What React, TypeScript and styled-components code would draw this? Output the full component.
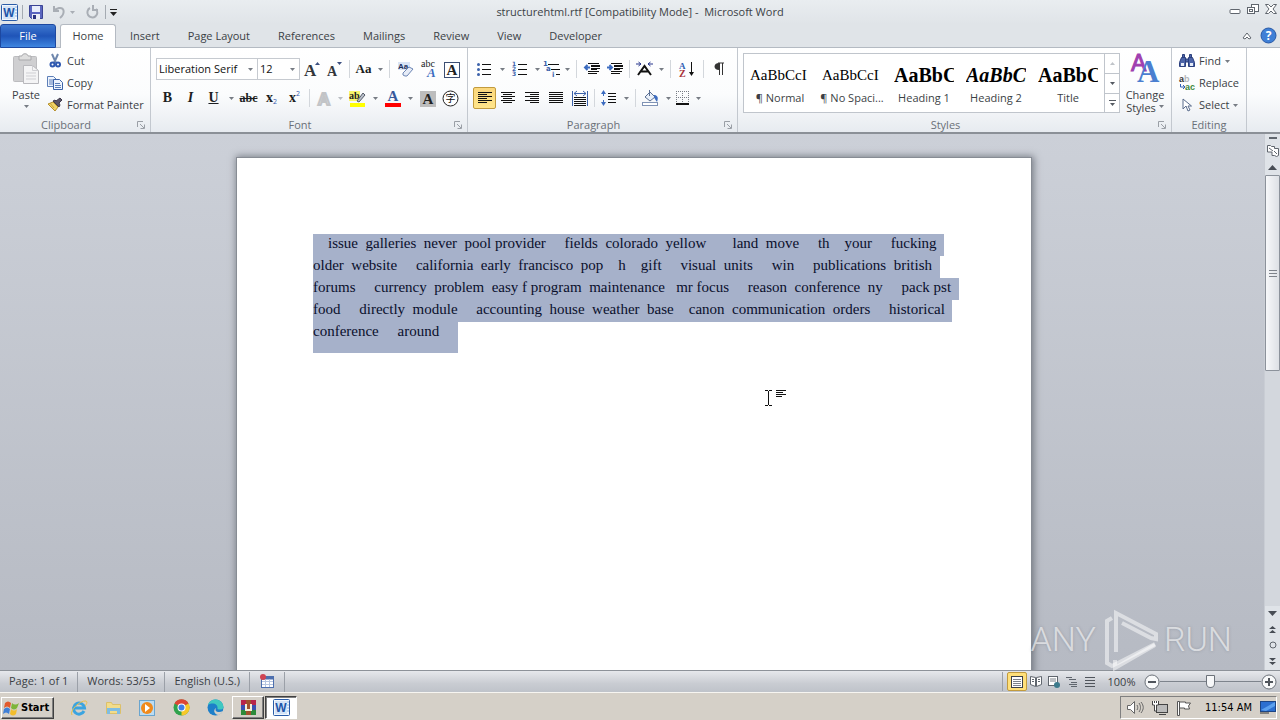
import React from "react";
import styled, { createGlobalStyle, css } from "styled-components";

const Global = createGlobalStyle`
  *, *::before, *::after { box-sizing: border-box; }
  body { margin: 0; overflow: hidden; }
  button, select, input { font: inherit; color: inherit; margin: 0; }
  button { border: 0; padding: 0; background: none; cursor: default; white-space: nowrap; }
  svg { display: block; flex: none; overflow: visible; }
`;

const Window = styled.div`
  display: flex;
  flex-direction: column;
  height: 100vh;
  overflow: hidden;
  font-family: "Open Sans", "Noto Sans", sans-serif;
  font-size: 11px;
  line-height: 16px;
  color: #3b3f45;
  background: #dfe3e8;
`;

/* ---------- title bar ---------- */

const TitleBar = styled.header`
  display: grid;
  grid-template-columns: 1fr auto 1fr;
  align-items: center;
  height: 24px;
  flex: none;
  background: linear-gradient(#e9edf0, #e0e4e8);
`;
const QuickAccess = styled.div`
  display: flex;
  align-items: center;
  gap: 4px;
  padding-left: 1px;
`;
const Title = styled.h1`
  margin: 0;
  font-size: 11px;
  font-weight: 400;
`;
const WindowButtons = styled.div`
  display: flex;
  justify-content: flex-end;
  align-items: center;
  gap: 6px;
  padding: 0 3px 6px 0;
`;
const PlainButton = styled.button`
  display: flex;
  align-items: center;
  justify-content: center;
`;
const QuickButton = styled(PlainButton)`
  margin: 0 2px;
`;
const QuickLine = styled.span`
  width: 1px;
  height: 14px;
  background: #a5abb2;
`;

/* ---------- tabs ---------- */

const TabBar = styled.nav`
  display: flex;
  height: 24px;
  flex: none;
  background: #e0e4e8;
  border-bottom: 1px solid #b4bac2;
`;
const Tab = styled.button<{ $kind?: "file" | "active" }>`
  height: 24px;
  padding: 0 14px;
  ${(p) =>
    p.$kind === "file" &&
    css`
      width: 56px;
      margin-right: 4px;
      color: #fff;
      border: 1px solid #1d48a0;
      border-radius: 3px 3px 0 0;
      background: linear-gradient(#3f78cf, #1f54b8 50%, #3f86e0);
    `}
  ${(p) =>
    p.$kind === "active" &&
    css`
      width: 56px;
      padding: 0 0 1px;
      border: 1px solid #b4bac2;
      border-bottom: 0;
      border-radius: 3px 3px 0 0;
      background: #fff;
    `}
`;
const TabTools = styled.div`
  display: flex;
  align-items: center;
  gap: 8px;
  margin-left: auto;
  padding-right: 3px;
`;

/* ---------- ribbon ---------- */

const Ribbon = styled.section`
  display: flex;
  height: 86px;
  flex: none;
  background: linear-gradient(#ffffff, #fbfcfd 55%, #e7ebf0);
  border-bottom: 2px solid #8b9097;
`;
const Group = styled.div<{ $width: number }>`
  display: flex;
  flex-direction: column;
  flex: none;
  width: ${(p) => p.$width}px;
  border-right: 1px solid #c3c8cf;
`;
const GroupBody = styled.div<{ $pad?: number }>`
  display: flex;
  flex: 1;
  padding-left: ${(p) => p.$pad ?? 5}px;
`;
const GroupFooter = styled.div`
  display: flex;
  align-items: center;
  height: 15px;
  color: #6a7078;
`;
const GroupName = styled.span`
  flex: 1;
  text-align: center;
`;
const Launcher = styled(PlainButton)`
  width: 18px;
`;
const Rows = styled.div`
  display: flex;
  flex-direction: column;
  gap: 5px;
  padding-top: 9px;
`;
const Row = styled.div`
  display: flex;
  align-items: center;
  height: 24px;
`;
const Tool = styled.button<{ $width?: number; $on?: boolean }>`
  display: flex;
  align-items: center;
  width: ${(p) => p.$width ?? 23}px;
  height: 22px;
  ${(p) =>
    p.$on &&
    css`
      border: 1px solid #c29b3e;
      border-radius: 2px;
      background: linear-gradient(#fbd77c, #ffe58a);
    `}
`;
const ToolFace = styled.span`
  display: flex;
  flex: 1;
  align-items: center;
  justify-content: center;
`;
const Divider = styled.span`
  width: 1px;
  height: 18px;
  margin: 0 3px;
  background: #d3d7dc;
`;
const Field = styled.label<{ $width: number }>`
  display: flex;
  align-items: center;
  width: ${(p) => p.$width}px;
  height: 22px;
  padding-right: 4px;
  margin-right: -1px;
  border: 1px solid #c6cad0;
  background: #fff;
  color: #111;
`;
const Select = styled.select`
  flex: 1;
  min-width: 0;
  padding: 0 0 0 2px;
  border: 0;
  background: none;
  appearance: none;
  outline: none;
`;
const BigButton = styled.button<{ $width: number }>`
  display: flex;
  flex-direction: column;
  align-items: center;
  width: ${(p) => p.$width}px;
  padding-top: 5px;
  line-height: 13px;
  svg:first-child { margin-bottom: 3px; }
`;
const BigText = styled.span`
  display: flex;
  align-items: center;
  gap: 3px;
  height: 13px;
`;
const Stack = styled.div`
  display: flex;
  flex-direction: column;
  padding-top: 2px;
`;
const LineButton = styled.button`
  display: flex;
  align-items: center;
  gap: 4px;
  height: 22px;
`;
const IconSlot = styled.span`
  display: flex;
  justify-content: center;
  width: 16px;
`;

const Gallery = styled.div`
  display: flex;
  width: 377px;
  height: 60px;
  margin-top: 5px;
  border: 1px solid #c0c5cc;
  background: #fff;
`;
const StyleItem = styled.button`
  display: flex;
  flex-direction: column;
  align-items: center;
  width: 72px;
  padding-top: 10px;
`;
const Sample = styled.span<{ $look: "text" | "bold" | "italic" }>`
  width: 60px;
  height: 26px;
  overflow: hidden;
  text-align: left;
  color: #000;
  font-family: "Liberation Serif", serif;
  font-size: ${(p) => (p.$look === "text" ? 15 : 20)}px;
  font-weight: ${(p) => (p.$look === "text" ? 400 : 700)};
  font-style: ${(p) => (p.$look === "italic" ? "italic" : "normal")};
  line-height: 22px;
`;
const GalleryScroll = styled.div`
  display: grid;
  grid-template-rows: repeat(3, 1fr);
  flex: 1;
  border-left: 1px solid #c0c5cc;
`;
const GalleryStep = styled(PlainButton)`
  & + & { border-top: 1px solid #c0c5cc; }
`;

/* ---------- document ---------- */

const Workspace = styled.main`
  display: flex;
  flex: 1;
  min-height: 0;
  background: linear-gradient(#ccd0d8, #b6bac3);
`;
const Canvas = styled.div`
  flex: 1;
  overflow: hidden;
  padding: 23px 0 0 4px;
`;
const Page = styled.article`
  width: 796px;
  max-width: 100%;
  min-height: 1120px;
  margin: 0 auto;
  padding: 76px;
  border: 1px solid #878c94;
  background: #fff;
  box-shadow: 1px 0 7px 1px rgba(70, 75, 85, 0.6);
`;
const TextLine = styled.div<{ $last?: boolean }>`
  width: fit-content;
  height: ${(p) => (p.$last ? 31 : 22)}px;
  font-family: "Liberation Serif", serif;
  font-size: 15px;
  line-height: 19px;
  white-space: pre;
  color: #0a0f2c;
  background: #a6b1ca;
`;
const Pointer = styled.svg`
  position: absolute;
  left: 765px;
  top: 388px;
`;
const Watermark = styled.div`
  position: absolute;
  right: 48px;
  bottom: 50px;
  display: flex;
  align-items: center;
  gap: 6px;
  font-family: "Roboto", sans-serif;
  font-size: 34px;
  font-weight: 300;
  line-height: 62px;
  color: rgba(255, 255, 255, 0.6);
  text-shadow: 0 0 3px rgba(90, 95, 105, 0.35);
`;

const ScrollColumn = styled.div`
  display: flex;
  flex-direction: column;
  width: 16px;
  background: #dfe3e8;
  border-left: 1px solid #c9cdd4;
`;
const ScrollTrack = styled.div`
  flex: 1;
  background: #d3d7dd;
`;
const ScrollThumb = styled.div`
  height: 196px;
  border: 1px solid #8c929b;
  border-radius: 1px;
  background: linear-gradient(90deg, #f7f8fa, #dde0e5);
  display: flex;
  align-items: center;
  justify-content: center;
`;
const ScrollButton = styled(PlainButton)<{ $height: number }>`
  height: ${(p) => p.$height}px;
  flex: none;
`;

/* ---------- status bar ---------- */

const StatusBar = styled.footer`
  display: flex;
  align-items: center;
  height: 22px;
  flex: none;
  padding-right: 3px;
  border-top: 1px solid #8d9299;
  background: linear-gradient(#e6e8ec, #c9ccd2 60%, #bfc3ca);
`;
const StatusItem = styled.button`
  height: 20px;
  padding: 0 9px 2px;
  border-right: 1px solid #9ba0a8;
`;
const StatusRight = styled.div`
  display: flex;
  align-items: center;
  margin-left: auto;
  padding-left: 4px;
  border-left: 1px solid #9ba0a8;
`;
const ViewButton = styled(PlainButton)<{ $on?: boolean }>`
  width: ${(p) => (p.$on ? 20 : 18)}px;
  height: 19px;
  ${(p) =>
    p.$on &&
    css`
      border: 1px solid #c29b3e;
      border-radius: 2px;
      background: #ffe07a;
    `}
`;
const ZoomValue = styled.button`
  width: 45px;
`;
const Slider = styled.input`
  width: 101px;
  height: 16px;
  appearance: none;
  background: linear-gradient(#7e848c, #7e848c) center / 100% 1px no-repeat;
  &::-webkit-slider-thumb {
    appearance: none;
    width: 9px;
    height: 13px;
    border: 1px solid #6c727a;
    border-radius: 1px 1px 5px 5px;
    background: #f7f8f9;
  }
`;

/* ---------- taskbar ---------- */

const Taskbar = styled.footer`
  display: flex;
  align-items: center;
  height: 28px;
  flex: none;
  padding: 2px 3px 0 1px;
  border-top: 1px solid #f7f5f1;
  background: #d5d0c8;
  color: #000;
  font-family: "DejaVu Sans Condensed", "DejaVu Sans", sans-serif;
`;
const StartButton = styled.button`
  display: flex;
  align-items: center;
  gap: 1px;
  width: 53px;
  height: 22px;
  padding-left: 1px;
  font-weight: 700;
  border: 1px solid;
  border-color: #fff #404040 #404040 #fff;
  box-shadow: inset -1px -1px #808080;
`;
const QuickLaunch = styled.div`
  display: flex;
  margin-left: 8px;
`;
const LaunchButton = styled(PlainButton)`
  width: 34px;
  height: 22px;
`;
const TaskButton = styled(PlainButton)<{ $pressed?: boolean }>`
  width: 32px;
  height: 23px;
  margin-right: 1px;
  border: 1px solid;
  border-color: ${(p) => (p.$pressed ? "#404040 #fff #fff #404040" : "#fff #404040 #404040 #fff")};
  box-shadow: ${(p) => (p.$pressed ? "inset 1px 1px #808080" : "inset -1px -1px #808080")};
  background: ${(p) => (p.$pressed ? "#fff" : "none")};
`;
const Tray = styled.div`
  display: flex;
  align-items: center;
  gap: 8px;
  height: 23px;
  margin-left: auto;
  padding: 0 0 0 6px;
  border: 1px solid;
  border-color: #808080 #fff #fff #808080;
`;
const Clock = styled.time`
  margin: 0 0 0 5px;
`;

/* ---------- icons ---------- */

const Caret = ({ color = "#777c84", up = false }: { color?: string; up?: boolean }) => (
  <svg width="5" height="3" viewBox="0 0 5 3">
    <path d={up ? "M0 3h5L2.500 0z" : "M0 0h5L2.500 3z"} fill={color} />
  </svg>
);

const CaretCell = styled.span`
  display: flex;
  justify-content: center;
  width: 12px;
`;

type Bar = [number, number, number, string?];
const Bars = ({ bars, w = 16, h = 16, children }: { bars: Bar[]; w?: number; h?: number; children?: React.ReactNode }) => (
  <svg width={w} height={h} viewBox={`0 0 ${w} ${h}`}>
    {bars.map(([x, y, len, c], i) => (
      <rect key={i} x={x} y={y} width={len} height="1" fill={c ?? "#111"} shapeRendering="crispEdges" />
    ))}
    {children}
  </svg>
);

const alignBars = (kind: "left" | "center" | "right" | "full"): Bar[] =>
  [0, 1, 2, 3, 4, 5].map((i) => {
    const len = kind === "full" ? 14 : i % 2 === 0 ? 14 : 9;
    const x = kind === "right" ? 15 - len : kind === "center" ? 1 + Math.floor((14 - len) / 2) : 1;
    return [x, 2 + i * 2, len];
  });

const serif = "Liberation Serif, serif";
const sans = "Liberation Sans, sans-serif";

const WordLogo = () => (
  <svg width="17" height="17" viewBox="0 0 17 17">
    <rect x="0.500" y="0.500" width="16" height="16" rx="1" fill="#f2f7fd" stroke="#2a5ca8" />
    <path d="M13 3h3M13 6h3M13 9h3M13 12h3" stroke="#8fb0dd" />
    <rect x="2" y="2" width="12" height="13" fill="#d3e3f7" />
    <text x="8" y="13" textAnchor="middle" fontSize="12" fontWeight="700" fontFamily={sans} fill="#1d55a8">W</text>
  </svg>
);
const SaveIcon = () => (
  <svg width="15" height="15" viewBox="0 0 15 15">
    <path d="M.5.5h13v13H2.500l-2-2z" fill="#5b66bf" stroke="#3b4494" />
    <rect x="3" y="1" width="8" height="6" fill="#e9eefb" />
    <rect x="3" y="9" width="8" height="5" fill="#eef0f6" />
    <rect x="4" y="10" width="3" height="4" fill="#2c3480" />
  </svg>
);
const UndoIcon = () => (
  <svg width="14" height="14" viewBox="0 0 14 14" fill="none" stroke="#a9aeb5" strokeWidth="2">
    <path d="M2 5l5-2c6-1 6 6 1 10" />
    <path d="M2 1v5h5" />
  </svg>
);
const RedoIcon = () => (
  <svg width="13" height="14" viewBox="0 0 13 14" fill="none" stroke="#a9aeb5" strokeWidth="2">
    <path d="M4 3a5 5 0 1 0 6 1" />
    <path d="M7 0v5h5" />
  </svg>
);
const MinimizeIcon = () => (
  <svg width="12" height="12" viewBox="0 0 12 12">
    <rect x="1" y="6.500" width="10" height="4" rx="1" fill="#fff" stroke="#60666e" />
  </svg>
);
const RestoreIcon = () => (
  <svg width="12" height="12" viewBox="0 0 12 12" fill="#fff" stroke="#60666e">
    <rect x="4.500" y="1.500" width="7" height="7" />
    <rect x="0.500" y="4.500" width="7" height="6" />
    <rect x="2.500" y="6.500" width="3" height="2" />
  </svg>
);
const CloseIcon = () => (
  <svg width="12" height="12" viewBox="0 0 12 12">
    <path d="M.5 1.500h3L6 4l2.500-2.500h3L8 6l3.500 4.500h-3L6 8l-2.500 2.500h-3L4 6z" fill="#fff" stroke="#60666e" />
  </svg>
);
const HelpIcon = () => (
  <svg width="17" height="17" viewBox="0 0 17 17">
    <circle cx="8.500" cy="8.500" r="7.500" fill="#3f7fd6" stroke="#2a5aa6" />
    <text x="8.500" y="13" textAnchor="middle" fontSize="12" fontWeight="700" fill="#fff">?</text>
  </svg>
);
const LauncherIcon = () => (
  <svg width="8" height="8" viewBox="0 0 8 8" fill="none" stroke="#9a9fa6">
    <path d="M.5 6V.5H6M3 3l4 4M7.500 3.500v4h-4" />
  </svg>
);
const PasteIcon = () => (
  <svg width="28" height="32" viewBox="0 0 28 32">
    <rect x="1.500" y="3.500" width="23" height="25" rx="1" fill="#cfcfd1" stroke="#bcbcbf" />
    <path d="M7 3h3c0-3 6-3 6 0h3v4H7z" fill="#dedede" stroke="#a9a9ac" />
    <path d="M11.500 12.500h9l6 5v13h-15z" fill="#f4f4f5" stroke="#b9b9bd" />
    <path d="M20.500 12.500v5h6M14 20h10M14 23h10M14 26h10" fill="none" stroke="#cfcfd3" />
  </svg>
);
const CutIcon = () => (
  <svg width="12" height="14" viewBox="0 0 12 14" fill="none">
    <path d="M3 0l4 9M9 0L5 9" stroke="#6f87ad" strokeWidth="2" />
    <circle cx="3.500" cy="10.500" r="2" stroke="#2e58b0" strokeWidth="2" />
    <circle cx="9" cy="10.500" r="2" stroke="#2e58b0" strokeWidth="2" />
  </svg>
);
const CopyIcon = () => (
  <svg width="16" height="14" viewBox="0 0 16 14" fill="#eef4fd" stroke="#5c7fb8">
    <path d="M.5.500h6l3 3v7h-9z" />
    <path d="M2 4h5M2 6h5M2 8h5" />
    <path d="M6.500 3.500h6l3 3v7h-9z" stroke="#3c63a8" />
    <path d="M8 7.500h5M8 9.500h6M8 11.500h6" />
  </svg>
);
const BrushIcon = () => (
  <svg width="16" height="14" viewBox="0 0 16 14">
    <path d="M1 6l7 7 3-4-5-5z" fill="#f0d468" stroke="#b58f2c" />
    <path d="M3 5l4 5" stroke="#c9a540" fill="none" />
    <path d="M6 3l6 6 1-2-1-2 3-3-2-2-4 3-1-1z" fill="#5a5568" stroke="#3f3b4c" />
  </svg>
);
const Letter = ({ size, grow }: { size: number; grow: boolean }) => (
  <svg width="17" height="17" viewBox="0 0 17 17">
    <text x="1" y="15" fontFamily={serif} fontWeight="700" fontSize={size} fill="#33363b">A</text>
    <path d={grow ? "M12 4h5l-2.500-3z" : "M11 1h5l-2.500 3z"} fill="#3c4f80" />
  </svg>
);
const Glyph = styled.span<{ $size?: number; $bold?: boolean; $italic?: boolean; $line?: string }>`
  font-family: "Liberation Serif", serif;
  font-size: ${(p) => p.$size ?? 14}px;
  font-weight: ${(p) => (p.$bold ? 700 : 400)};
  font-style: ${(p) => (p.$italic ? "italic" : "normal")};
  text-decoration: ${(p) => p.$line ?? "none"};
  color: #1c1e22;
`;
const Mini = styled.span<{ $raise?: boolean }>`
  align-self: ${(p) => (p.$raise ? "flex-start" : "flex-end")};
  font-size: 7px;
  line-height: 8px;
  color: #2f58ad;
`;
const ClearIcon = () => (
  <svg width="17" height="17" viewBox="0 0 17 17">
    <rect x="1" y="1" width="12" height="8" fill="#d9e4f5" />
    <text x="1" y="8" fontSize="8" fontFamily={sans} fontWeight="700" fill="#1c2f5c">Aa</text>
    <path d="M6 12l6-6 4 2-6 7H8l-2-1z" fill="#e6ecf7" stroke="#6d86b4" />
  </svg>
);
const PhoneticIcon = () => (
  <svg width="17" height="18" viewBox="0 0 17 18">
    <text x="1" y="7" fontSize="10" fontFamily={serif} fill="#222">abc</text>
    <text x="7" y="17" fontSize="13" fontFamily={serif} fontStyle="italic" fontWeight="700" fill="#3c6cc0">A</text>
  </svg>
);
const BoxedA = ({ filled = false }: { filled?: boolean }) => (
  <svg width="16" height="17" viewBox="0 0 16 17">
    <rect x="0.500" y="1.500" width="15" height="15" fill={filled ? "#bdbdbd" : "#fff"} stroke={filled ? "#bdbdbd" : "#3c4f73"} />
    <text x="8" y="14" textAnchor="middle" fontSize="15" fontFamily={serif} fontWeight="700" fill="#222">A</text>
  </svg>
);
const EncloseIcon = () => (
  <svg width="17" height="17" viewBox="0 0 17 17">
    <circle cx="8.500" cy="8.500" r="7.500" fill="#fff" stroke="#222" />
    <text x="8.500" y="12" textAnchor="middle" fontSize="10" fontFamily="Noto Sans CJK JP, sans-serif" fill="#111">字</text>
  </svg>
);
const OutlineA = () => (
  <svg width="16" height="17" viewBox="0 0 16 17">
    <text x="8" y="15" textAnchor="middle" fontSize="17" fontFamily={sans} fontWeight="700" fill="#fff" stroke="#c2c4c7" strokeWidth="2">A</text>
  </svg>
);
const HighlightIcon = () => (
  <svg width="17" height="17" viewBox="0 0 17 17">
    <rect x="0" y="1" width="11" height="10" fill="#f9f66c" />
    <text x="0" y="9" fontSize="10" fontFamily={serif} fontWeight="700" fill="#222">ab</text>
    <path d="M8 11l6-8 2 2-6 7z" fill="#b9bfcb" stroke="#555c68" />
    <rect x="1" y="13" width="15" height="4" fill="#ffff00" />
  </svg>
);
const FontColorIcon = () => (
  <svg width="16" height="17" viewBox="0 0 16 17">
    <text x="8" y="11" textAnchor="middle" fontSize="15" fontFamily={serif} fontWeight="700" fill="#38599c">A</text>
    <rect x="0" y="13" width="16" height="4" fill="#f00" />
  </svg>
);
const BulletsIcon = () => (
  <Bars bars={[[5, 3, 9], [5, 8, 9], [5, 13, 9]]}>
    <g fill="#3c62ab">
      <circle cx="1.500" cy="3.500" r="1.500" /><circle cx="1.500" cy="8.500" r="1.500" /><circle cx="1.500" cy="13.500" r="1.500" />
    </g>
  </Bars>
);
const NumberingIcon = () => (
  <Bars bars={[[6, 3, 9], [6, 8, 9], [6, 13, 9]]}>
    <g fontSize="6" fontWeight="700" fill="#3c62ab" fontFamily="DejaVu Sans, sans-serif">
      <text x="0" y="5">1</text><text x="0" y="10">2</text><text x="0" y="15">3</text>
    </g>
  </Bars>
);
const MultilevelIcon = () => (
  <Bars w={18} bars={[[5, 3, 11], [8, 8, 9], [13, 13, 4]]}>
    <g fontSize="7" fontWeight="700" fill="#3c62ab" fontFamily="DejaVu Sans, sans-serif">
      <text x="0" y="5">1</text><text x="3" y="10">a</text><text x="9" y="16">i</text>
    </g>
  </Bars>
);
const IndentIcon = ({ out }: { out?: boolean }) => (
  <Bars bars={[[4, 2, 11], [7, 4, 9], [7, 5, 9], [7, 7, 9], [7, 8, 6], [4, 10, 11], [4, 12, 9]]}>
    <path d={out ? "M6 6.500H1M3.500 4L1 6.500 3.500 9" : "M0 6.500h5M2.500 4L5 6.500 2.500 9"} fill="none" stroke="#3c6cc0" strokeWidth="2" />
  </Bars>
);
const AsianLayoutIcon = () => (
  <svg width="17" height="16" viewBox="0 0 17 16" fill="none">
    <path d="M2 14l6.500-9L15 14M5 10.500h7" stroke="#111" strokeWidth="2" />
    <path d="M0 3h5M2.500 1L5 3 2.500 5M17 3h-5M14.500 1L12 3l2.500 2" stroke="#26358c" />
  </svg>
);
const SortIcon = () => (
  <svg width="16" height="17" viewBox="0 0 16 17">
    <text x="0" y="8" fontSize="9" fontWeight="700" fontFamily={serif} fill="#2f5fb5">A</text>
    <text x="0" y="16" fontSize="10" fontWeight="700" fontFamily={serif} fill="#a8323a">Z</text>
    <path d="M12.500 1v13" stroke="#111" />
    <path d="M10 11h5l-2.500 4z" fill="#111" />
  </svg>
);
const PilcrowIcon = () => (
  <svg width="12" height="14" viewBox="0 0 12 14">
    <path d="M5 1h6M6.500 1v12M9.500 1v12" fill="none" stroke="#333" />
    <path d="M6 8C0 8 0 1 6 1z" fill="#333" />
  </svg>
);
const DistributeIcon = () => (
  <Bars h={17} bars={[[2, 7, 12], [2, 9, 12], [2, 11, 12], [2, 13, 12], [2, 15, 12]]}>
    <path d="M.5 1v15M15.500 1v15M2 3.500h12M5 1L2 3.500 5 6M11 1l3 2.500L11 6" fill="none" stroke="#3c62ab" />
  </Bars>
);
const SpacingIcon = () => (
  <Bars bars={[[7, 3, 8], [7, 6, 8], [7, 9, 8], [7, 12, 8]]}>
    <path d="M2.500 2v4M2.500 14v-4" stroke="#3c6cc0" />
    <path d="M0 4l2.500-4L5 4zM0 12l2.500 4L5 12z" fill="#3c6cc0" />
  </Bars>
);
const FillIcon = () => (
  <svg width="17" height="16" viewBox="0 0 17 16">
    <path d="M3 7l5-5 5 5-5 4z" fill="#e9f0f9" stroke="#5a6f93" />
    <path d="M7.500 0v6" stroke="#5a6f93" />
    <path d="M12 5c3 0 5 2 3 7-1-2-3-3-3-7z" fill="#3c6cc0" />
    <rect x="0.500" y="12.500" width="15" height="3" fill="#fff" stroke="#7f93b5" />
  </svg>
);
const BordersIcon = () => (
  <svg width="14" height="14" viewBox="0 0 14 14">
    <path d="M0 .5h13M12.500 0v12M.5 0v12M6.500 0v12M0 6.500h13" fill="none" stroke="#777c84" strokeDasharray="1 1" />
    <path d="M0 13h13" stroke="#111" strokeWidth="2" />
  </svg>
);
const ChangeStylesIcon = () => (
  <svg width="30" height="32" viewBox="0 0 30 32">
    <text x="1" y="18" fontSize="23" fontFamily={sans} fill="#a03fb0" stroke="#a03fb0">A</text>
    <text x="7" y="29" fontSize="31" fontFamily={serif} fontWeight="700" fill="#4a7fd0">A</text>
  </svg>
);
const FindIcon = () => (
  <svg width="16" height="14" viewBox="0 0 16 14" fill="#4c64a8" stroke="#2b3f7d">
    <path d="M3.500.500h2v3h-2zM10.500.500h2v3h-2zM6 5h4v3H6z" />
    <path d="M2.500 3.500h4v9h-6v-4zM9.500 3.500h4l2 5v4h-6z" />
    <path d="M2 9h3v3H2zM11 9h3v3h-3z" fill="#e6ecf8" stroke="none" />
  </svg>
);
const ReplaceIcon = () => (
  <svg width="16" height="16" viewBox="0 0 16 16" fontFamily={sans} fontWeight="700" fontSize="9">
    <text x="0" y="7" fill="#333">a</text>
    <text x="5" y="7" fill="#b3b6ba">b</text>
    <text x="6" y="15" fill="#3d8a3d">ac</text>
    <path d="M1.500 9v3h4M4 10l2 2-2 2" fill="none" stroke="#2f5fb5" />
  </svg>
);
const SelectIcon = () => (
  <svg width="10" height="14" viewBox="0 0 10 14">
    <path d="M1 1v10l3-3 2 5 2-1-2-4h3.500z" fill="#fff" stroke="#5a6c8c" />
  </svg>
);

const Play = () => (
  <svg width="56" height="62" viewBox="0 0 56 62" fill="none" stroke="rgba(255,255,255,.5)" strokeWidth="4">
    <path d="M10 10l-5 3v42l5 3 43-22" />
    <path d="M14 44V5l40 21v5l-5-1-29-15" />
    <path d="M13 52v8l40-23" />
  </svg>
);

/* ---------- data ---------- */

const lines = [
  "    issue  galleries  never  pool provider     fields  colorado  yellow       land  move     th    your     fucking  ",
  "older  website     california  early  francisco  pop    h    gift     visual  units     win     publications  british  ",
  "forums     currency  problem  easy f program  maintenance   mr focus     reason  conference  ny     pack pst  ",
  "food     directly  module     accounting  house  weather  base    canon  communication  orders     historical  ",
  "conference     around     ",
];
const tabs = ["Insert", "Page Layout", "References", "Mailings", "Review", "View", "Developer"];
const styleItems: { sample: string; name: string; look: "text" | "bold" | "italic" }[] = [
  { sample: "AaBbCcI", name: "¶ Normal", look: "text" },
  { sample: "AaBbCcI", name: "¶ No Spaci...", look: "text" },
  { sample: "AaBbC", name: "Heading 1", look: "bold" },
  { sample: "AaBbCc", name: "Heading 2", look: "italic" },
  { sample: "AaBbC", name: "Title", look: "bold" },
];

/* ---------- pieces ---------- */

type ToolProps = { label: string; width?: number; drop?: boolean; on?: boolean; caret?: string; children: React.ReactNode };
const ToolButton = ({ label, width, drop, on, caret, children }: ToolProps) => (
  <Tool type="button" aria-label={label} $width={width ?? (drop ? 35 : 23)} $on={on}>
    <ToolFace>{children}</ToolFace>
    {drop && <CaretCell><Caret color={caret} /></CaretCell>}
  </Tool>
);

const RibbonGroup = ({ name, width, pad, launcher = true, children }: { name: string; width: number; pad?: number; launcher?: boolean; children: React.ReactNode }) => (
  <Group $width={width}>
    <GroupBody $pad={pad}>{children}</GroupBody>
    <GroupFooter>
      <GroupName>{name}</GroupName>
      {launcher && <Launcher type="button" aria-label={`${name} options`}><LauncherIcon /></Launcher>}
    </GroupFooter>
  </Group>
);

const RoundIcon = ({ plus }: { plus?: boolean }) => (
  <svg width="16" height="16" viewBox="0 0 16 16">
    <circle cx="8" cy="8" r="7" fill="#f8f9fa" stroke="#6c727a" />
    <path d={plus ? "M4 8h8M8 4v8" : "M4 8h8"} stroke="#50555c" strokeWidth="2" />
  </svg>
);

const TaskIcons = {
  start: (
    <svg width="17" height="16" viewBox="0 0 17 16">
      <path d="M2 3c2-2 4-2 6 0L7 8C5 6 3 6 1 8z" fill="#e2592b" />
      <path d="M9 3c2 2 4 2 7 0l-2 5c-2 2-4 2-6 0z" fill="#7db53a" />
      <path d="M1 9c2-2 4-2 6 0l-1 5c-2-2-4-2-6 0z" fill="#3f7fd6" />
      <path d="M8 9c2 2 4 2 6 0l-1 5c-2 2-4 2-6 0z" fill="#f2bd2c" />
    </svg>
  ),
  ie: (
    <svg width="18" height="18" viewBox="0 0 18 18" fill="none">
      <path d="M14 12a5.500 5.500 0 1 1 .5-3H5" stroke="#3ba4e0" strokeWidth="3" />
      <path d="M2 16C-1 12 10 1 16 2c2 1 0 4-1 5" stroke="#e9c04a" strokeWidth="1" />
    </svg>
  ),
  folder: (
    <svg width="17" height="16" viewBox="0 0 17 16">
      <path d="M1.500 2.500h5l1 2h8v9h-14z" fill="#f2dc8a" stroke="#dcc06a" />
      <path d="M2 14V8h13v6h-3v-3H5v3z" fill="#7fbde3" />
    </svg>
  ),
  media: (
    <svg width="16" height="16" viewBox="0 0 16 16">
      <rect x="0.500" y="0.500" width="15" height="15" fill="#bcdcf2" stroke="#6aa5cf" />
      <circle cx="8" cy="8" r="6" fill="#f08a1c" /><path d="M6 4l5 4-5 4z" fill="#fff" />
    </svg>
  ),
  chrome: (
    <svg width="17" height="17" viewBox="0 0 17 17">
      <circle cx="8.500" cy="8.500" r="8" fill="#2fa24c" />
      <path d="M8.500 8.500L1.500 4.500a8 8 0 0 1 14 0z" fill="#dd4535" />
      <path d="M8.500 8.500l7-4a8 8 0 0 1-7 12z" fill="#f8c828" />
      <circle cx="8.500" cy="8.500" r="4" fill="#fff" /><circle cx="8.500" cy="8.500" r="3" fill="#3f7de8" />
    </svg>
  ),
  edge: (
    <svg width="17" height="17" viewBox="0 0 17 17">
      <circle cx="8.500" cy="8.500" r="8" fill="#1d7fc9" />
      <path d="M1 6C3-1 15-2 16.500 8c0 3-4 3-6 2 1-5-5-7-9.500-4z" fill="#3fc8c0" />
      <path d="M9 9c-2 4 3 5 7 3-1 2-3 4-5 4-4-1-5-5-2-7z" fill="#d5d0c8" />
    </svg>
  ),
  rar: (
    <svg width="17" height="17" viewBox="0 0 17 17">
      <rect x="1" y="1" width="15" height="5" fill="#b8254a" /><rect x="1" y="6" width="15" height="5" fill="#3b4fb0" />
      <rect x="1" y="11" width="15" height="5" fill="#2e8a3a" /><rect x="6" y="1" width="5" height="15" fill="#a0522d" />
      <path d="M6 5v6h5V5" fill="none" stroke="#f4efd8" strokeWidth="2" />
    </svg>
  ),
};

const SoundIcon = () => (
  <svg width="17" height="15" viewBox="0 0 17 15" fill="#fff" stroke="#666">
    <path d="M.5 5.500h3l4-4v12l-4-4h-3z" /><path d="M10 5c1 2 1 3 0 5M12 3c2 3 2 6 0 9M14 2c3 4 3 7 0 11" fill="none" />
  </svg>
);
const NetworkIcon = () => (
  <svg width="16" height="16" viewBox="0 0 16 16" fill="#fff" stroke="#444">
    <rect x="4.500" y="4.500" width="11" height="8" fill="#bbb" /><path d="M7 14.500h7" /><path d="M.5 1v4h2v6h2V5h2V1M2.500 1v2M4.500 1v2" />
  </svg>
);
const FlagIcon = () => (
  <svg width="16" height="16" viewBox="0 0 16 16" fill="#fff" stroke="#555">
    <path d="M1.500 1.500v14h2v-14zM3.500 2h6v1h5l-2 3 1 3h-5V8h-5z" />
  </svg>
);
const DesktopIcon = () => (
  <svg width="16" height="13" viewBox="0 0 16 13">
    <rect x="0.500" y="0.500" width="15" height="10" fill="#2c6fd0" stroke="#1d4584" /><path d="M1 9L15 1v4L6 10z" fill="#5ba0ee" /><path d="M0 12h9" stroke="#333" />
  </svg>
);

export default function App() {
  return (
    <Window>
      <Global />
      <TitleBar>
        <QuickAccess>
          <WordLogo />
          <QuickLine />
          <QuickButton type="button" aria-label="Save"><SaveIcon /></QuickButton>
          <QuickButton type="button" aria-label="Undo"><ToolFace><UndoIcon /></ToolFace><CaretCell><Caret color="#a9aeb5" /></CaretCell></QuickButton>
          <QuickButton type="button" aria-label="Redo"><RedoIcon /></QuickButton>
          <QuickLine />
          <PlainButton type="button" aria-label="Customize quick access">
            <svg width="7" height="7" viewBox="0 0 7 7"><path d="M0 .5h7" stroke="#222" /><path d="M0 3h7L3.500 7z" fill="#222" /></svg>
          </PlainButton>
        </QuickAccess>
        <Title>structurehtml.rtf [Compatibility Mode] -&nbsp; Microsoft Word</Title>
        <WindowButtons>
          <PlainButton type="button" aria-label="Minimize"><MinimizeIcon /></PlainButton>
          <PlainButton type="button" aria-label="Restore"><RestoreIcon /></PlainButton>
          <PlainButton type="button" aria-label="Close"><CloseIcon /></PlainButton>
        </WindowButtons>
      </TitleBar>

      <TabBar>
        <Tab type="button" $kind="file">File</Tab>
        <Tab type="button" $kind="active">Home</Tab>
        {tabs.map((t) => <Tab type="button" key={t}>{t}</Tab>)}
        <TabTools>
          <PlainButton type="button" aria-label="Collapse ribbon">
            <svg width="10" height="8" viewBox="0 0 10 8"><path d="M1 6l4-5 4 5-2 1-2-2-2 2z" fill="#fff" stroke="#60666e" /></svg>
          </PlainButton>
          <PlainButton type="button" aria-label="Help"><HelpIcon /></PlainButton>
        </TabTools>
      </TabBar>

      <Ribbon>
        <RibbonGroup name="Clipboard" width={151}>
          <BigButton type="button" $width={42}>
            <PasteIcon />
            <BigText>Paste</BigText>
            <BigText><Caret /></BigText>
          </BigButton>
          <Stack>
            <LineButton type="button"><IconSlot><CutIcon /></IconSlot>Cut</LineButton>
            <LineButton type="button"><IconSlot><CopyIcon /></IconSlot>Copy</LineButton>
            <LineButton type="button"><IconSlot><BrushIcon /></IconSlot>Format Painter</LineButton>
          </Stack>
        </RibbonGroup>

        <RibbonGroup name="Font" width={317}>
          <Rows>
            <Row>
              <Field $width={102}>
                <Select aria-label="Font" defaultValue="Liberation Serif"><option>Liberation Serif</option></Select>
                <Caret />
              </Field>
              <Field $width={43}>
                <Select aria-label="Font size" defaultValue="12"><option>12</option></Select>
                <Caret />
              </Field>
              <ToolButton label="Grow font" width={24}><Letter size={17} grow /></ToolButton>
              <ToolButton label="Shrink font"><Letter size={14} grow={false} /></ToolButton>
              <Divider />
              <ToolButton label="Change case" width={33} drop><Glyph $bold $size={13}>Aa</Glyph></ToolButton>
              <Divider />
              <ToolButton label="Clear formatting" width={24}><ClearIcon /></ToolButton>
              <ToolButton label="Phonetic guide"><PhoneticIcon /></ToolButton>
              <ToolButton label="Character border"><BoxedA /></ToolButton>
            </Row>
            <Row>
              <ToolButton label="Bold"><Glyph $bold>B</Glyph></ToolButton>
              <ToolButton label="Italic"><Glyph $bold $italic>I</Glyph></ToolButton>
              <ToolButton label="Underline" drop><Glyph $bold $line="underline">U</Glyph></ToolButton>
              <ToolButton label="Strikethrough"><Glyph $size={12} $bold $line="line-through">abc</Glyph></ToolButton>
              <ToolButton label="Subscript"><Glyph $bold>x</Glyph><Mini>2</Mini></ToolButton>
              <ToolButton label="Superscript"><Glyph $bold>x</Glyph><Mini $raise>2</Mini></ToolButton>
              <Divider />
              <ToolButton label="Text effects" drop width={33} caret="#b9bdc2"><OutlineA /></ToolButton>
              <ToolButton label="Highlight" drop><HighlightIcon /></ToolButton>
              <ToolButton label="Font color" drop><FontColorIcon /></ToolButton>
              <ToolButton label="Character shading"><BoxedA filled /></ToolButton>
              <ToolButton label="Enclose characters"><EncloseIcon /></ToolButton>
            </Row>
          </Rows>
        </RibbonGroup>

        <RibbonGroup name="Paragraph" width={270}>
          <Rows>
            <Row>
              <ToolButton label="Bullets" drop><BulletsIcon /></ToolButton>
              <ToolButton label="Numbering" drop><NumberingIcon /></ToolButton>
              <ToolButton label="Multilevel list" drop width={30}><MultilevelIcon /></ToolButton>
              <Divider />
              <ToolButton label="Decrease indent"><IndentIcon out /></ToolButton>
              <ToolButton label="Increase indent"><IndentIcon /></ToolButton>
              <Divider />
              <ToolButton label="Asian layout" drop width={34}><AsianLayoutIcon /></ToolButton>
              <Divider />
              <ToolButton label="Sort" width={26}><SortIcon /></ToolButton>
              <Divider />
              <ToolButton label="Show marks" width={24}><PilcrowIcon /></ToolButton>
            </Row>
            <Row>
              <ToolButton label="Align left" on><Bars bars={alignBars("left")} /></ToolButton>
              <ToolButton label="Center" width={24}><Bars bars={alignBars("center")} /></ToolButton>
              <ToolButton label="Align right" width={24}><Bars bars={alignBars("right")} /></ToolButton>
              <ToolButton label="Justify" width={24}><Bars bars={alignBars("full")} /></ToolButton>
              <ToolButton label="Distribute"><DistributeIcon /></ToolButton>
              <Divider />
              <ToolButton label="Line spacing" drop width={34}><SpacingIcon /></ToolButton>
              <Divider />
              <ToolButton label="Shading" drop><FillIcon /></ToolButton>
              <ToolButton label="Borders" drop width={30}><BordersIcon /></ToolButton>
            </Row>
          </Rows>
        </RibbonGroup>

        <RibbonGroup name="Styles" width={434}>
          <Gallery>
            {styleItems.map((s) => (
              <StyleItem type="button" key={s.name}>
                <Sample $look={s.look}>{s.sample}</Sample>
                <span>{s.name}</span>
              </StyleItem>
            ))}
            <GalleryScroll>
              <GalleryStep type="button" aria-label="Scroll up"><Caret up color="#c0c4c9" /></GalleryStep>
              <GalleryStep type="button" aria-label="Scroll down"><Caret color="#555a62" /></GalleryStep>
              <GalleryStep type="button" aria-label="More styles">
                <svg width="7" height="6" viewBox="0 0 7 6"><path d="M0 .5h7" stroke="#555a62" /><path d="M1 3h5L3.500 6z" fill="#555a62" /></svg>
              </GalleryStep>
            </GalleryScroll>
          </Gallery>
          <BigButton type="button" $width={50}>
            <ChangeStylesIcon />
            <BigText>Change</BigText>
            <BigText>Styles <Caret /></BigText>
          </BigButton>
        </RibbonGroup>

        <RibbonGroup name="Editing" width={75} pad={7} launcher={false}>
          <Stack>
            <LineButton type="button"><IconSlot><FindIcon /></IconSlot>Find<Caret /></LineButton>
            <LineButton type="button"><IconSlot><ReplaceIcon /></IconSlot>Replace</LineButton>
            <LineButton type="button"><IconSlot><SelectIcon /></IconSlot>Select<Caret /></LineButton>
          </Stack>
        </RibbonGroup>
      </Ribbon>

      <Workspace>
        <Canvas>
          <Page>
            {lines.map((line, i) => (
              <TextLine key={i} $last={i === lines.length - 1}>{line}</TextLine>
            ))}
          </Page>
        </Canvas>
        <ScrollColumn>
          <ScrollButton type="button" aria-label="Split" $height={8}>
            <svg width="8" height="2"><rect width="8" height="2" fill="#60666e" /></svg>
          </ScrollButton>
          <ScrollButton type="button" aria-label="Ruler" $height={17}>
            <svg width="12" height="12" viewBox="0 0 12 12" fill="#fff" stroke="#60666e"><path d="M.5.500h3l1 1h3v2h4v7l-2 1-2-1H5V7H.5z" /><path d="M2 3l4 3M7 6l3 3" /></svg>
          </ScrollButton>
          <ScrollButton type="button" aria-label="Scroll up" $height={16}>
            <svg width="9" height="5" viewBox="0 0 9 5"><path d="M0 5h9L4.500 0z" fill="#484d55" /></svg>
          </ScrollButton>
          <ScrollTrack>
            <ScrollThumb>
              <svg width="8" height="7" viewBox="0 0 8 7"><path d="M0 .5h8M0 3.500h8M0 6.500h8" stroke="#7d828a" /></svg>
            </ScrollThumb>
          </ScrollTrack>
          <ScrollButton type="button" aria-label="Scroll down" $height={15}>
            <svg width="9" height="5" viewBox="0 0 9 5"><path d="M0 0h9L4.500 5z" fill="#484d55" /></svg>
          </ScrollButton>
          <ScrollButton type="button" aria-label="Previous page" $height={16}>
            <svg width="7" height="7" viewBox="0 0 7 7"><path d="M0 3h7L3.500 0zM0 7h7L3.500 4z" fill="#484d55" /></svg>
          </ScrollButton>
          <ScrollButton type="button" aria-label="Browse object" $height={16}>
            <svg width="8" height="8" viewBox="0 0 8 8"><circle cx="4" cy="4" r="3" fill="none" stroke="#60666e" /></svg>
          </ScrollButton>
          <ScrollButton type="button" aria-label="Next page" $height={17}>
            <svg width="7" height="7" viewBox="0 0 7 7"><path d="M0 0h7L3.500 3zM0 4h7L3.500 7z" fill="#484d55" /></svg>
          </ScrollButton>
        </ScrollColumn>
      </Workspace>

      <StatusBar>
        <StatusItem type="button">Page: 1 of 1</StatusItem>
        <StatusItem type="button">Words: 53/53</StatusItem>
        <StatusItem type="button">English (U.S.)</StatusItem>
        <StatusItem type="button" aria-label="Macro">
          <svg width="16" height="14" viewBox="0 0 16 14"><rect x="2.500" y="2.500" width="12" height="11" fill="#fff" stroke="#4d6fae" /><path d="M3 4h11" stroke="#4d6fae" strokeWidth="3" /><path d="M3 7.500h11M3 10.500h11M6.500 5v8M10.500 5v8" stroke="#b5c5e0" /><circle cx="4" cy="3" r="3" fill="#cf4452" /></svg>
        </StatusItem>
        <StatusRight>
          <ViewButton type="button" aria-label="Print layout" $on>
            <svg width="12" height="12" viewBox="0 0 12 12"><rect x="0.500" y="0.500" width="11" height="11" fill="#fff" stroke="#3c4048" /><path d="M2 3.500h8M2 5.500h8M2 7.500h8M2 9.500h8" stroke="#7d828a" /></svg>
          </ViewButton>
          <ViewButton type="button" aria-label="Full screen reading">
            <svg width="12" height="11" viewBox="0 0 12 11" fill="#fff" stroke="#60666e"><path d="M.5.500l5 1v9l-5-2zM11.500.500l-5 1v9l5-2z" /><path d="M2 3.500h2M2 5.500h2M8 3.500h2M8 5.500h2" /></svg>
          </ViewButton>
          <ViewButton type="button" aria-label="Web layout">
            <svg width="12" height="12" viewBox="0 0 12 12"><rect x="0.500" y="0.500" width="9" height="9" fill="#fff" stroke="#60666e" /><path d="M2 3h6M2 5h6" stroke="#7d828a" /><circle cx="9" cy="9" r="3" fill="#3c7a8c" /></svg>
          </ViewButton>
          <ViewButton type="button" aria-label="Outline">
            <Bars w={12} h={12} bars={[[0, 1, 6, "#60666e"], [3, 3, 7, "#60666e"], [5, 6, 6, "#60666e"], [3, 8, 8, "#60666e"], [5, 10, 6, "#60666e"]]} />
          </ViewButton>
          <ViewButton type="button" aria-label="Draft">
            <Bars w={12} h={12} bars={[[1, 1, 10, "#50555c"], [1, 4, 10, "#50555c"], [1, 7, 10, "#50555c"], [1, 10, 10, "#50555c"]]} />
          </ViewButton>
          <ZoomValue type="button">100%</ZoomValue>
          <PlainButton type="button" aria-label="Zoom out"><RoundIcon /></PlainButton>
          <Slider type="range" aria-label="Zoom" min={0} max={100} defaultValue={50} />
          <PlainButton type="button" aria-label="Zoom in"><RoundIcon plus /></PlainButton>
        </StatusRight>
      </StatusBar>

      <Taskbar>
        <StartButton type="button">{TaskIcons.start}Start</StartButton>
        <QuickLaunch>
          <LaunchButton type="button" aria-label="Internet Explorer">{TaskIcons.ie}</LaunchButton>
          <LaunchButton type="button" aria-label="Explorer">{TaskIcons.folder}</LaunchButton>
          <LaunchButton type="button" aria-label="Media Player">{TaskIcons.media}</LaunchButton>
          <LaunchButton type="button" aria-label="Chrome">{TaskIcons.chrome}</LaunchButton>
          <LaunchButton type="button" aria-label="Edge">{TaskIcons.edge}</LaunchButton>
        </QuickLaunch>
        <TaskButton type="button" aria-label="WinRAR">{TaskIcons.rar}</TaskButton>
        <TaskButton type="button" aria-label="Word" $pressed><WordLogo /></TaskButton>
        <Tray>
          <SoundIcon />
          <NetworkIcon />
          <FlagIcon />
          <Clock>11:54 AM</Clock>
          <DesktopIcon />
        </Tray>
      </Taskbar>

      <Watermark>ANY<Play />RUN</Watermark>
      <Pointer width="24" height="20" viewBox="0 0 24 20" fill="none" stroke="#111">
        <path d="M0 2.500h3M4 2.500h3M3.500 3v14M0 17.500h3M4 17.500h3M11 2.500h10M11 4.500h7M11 6.500h10M11 8.500h6" />
      </Pointer>
    </Window>
  );
}
